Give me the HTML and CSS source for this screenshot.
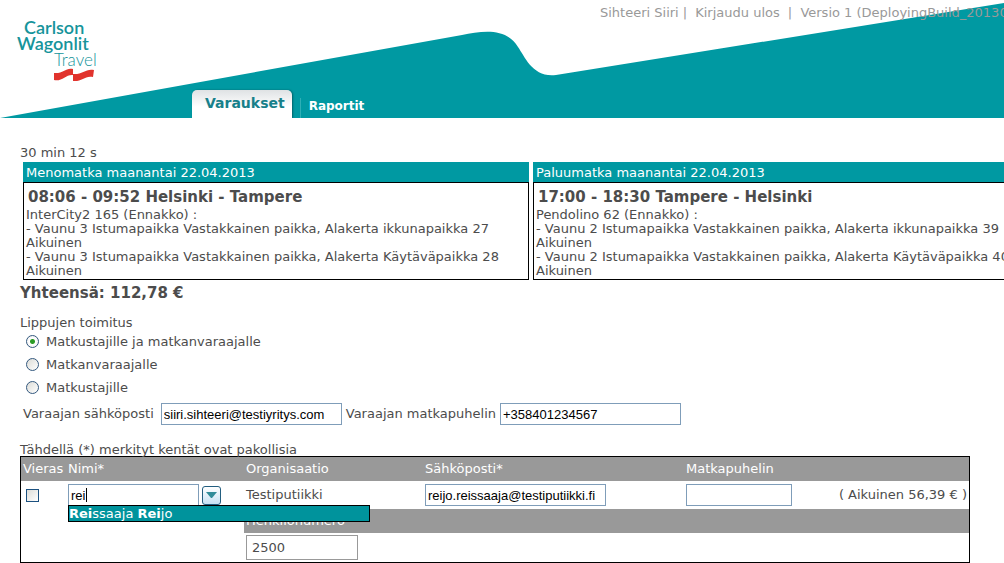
FILE: index.html
```html
<!DOCTYPE html>
<html lang="fi">
<head>
<meta charset="utf-8">
<title>Varaukset</title>
<link rel="stylesheet" href="styles.css">
</head>
<body>
<header class="header">
  <svg class="wave" aria-hidden="true">
    <path d="M0 118 L462 35 C482 31 506 27 518 47 C525 57 533 78 556 75 L1004 3 L2200 -189 V118 Z" fill="#0099a2"/>
  </svg>
  <svg class="logo" viewBox="0 0 90 66" role="img" aria-label="Carlson Wagonlit Travel">
    <text class="logo-name" x="12" y="17">Carlson</text>
    <text class="logo-name" x="5" y="33">Wagonlit</text>
    <text class="logo-light" x="42" y="49">Travel</text>
    <path d="M42 56 C51 57 54 50 61 52 L61 57 C70 58 74 51 82 53 L81 60 C73 58 70 65 61 64 L61 58 C54 57 50 65 42 63 Z" fill="#e1332d"/>
  </svg>
  <p class="session"><span>Sihteeri Siiri |</span><a href="#">Kirjaudu ulos</a><span class="version">|&nbsp; Versio 1 (DeployingBuild_201303</span></p>
  <nav class="tabs">
    <a class="tab tab-active" href="#">Varaukset</a>
    <a class="tab" href="#">Raportit</a>
  </nav>
</header>

<main class="content">
  <p class="timer">30 min 12 s</p>
  <section class="trips">
    <article class="trip">
      <h2 class="trip-day">Menomatka maanantai 22.04.2013</h2>
      <div class="trip-body">
        <h3 class="trip-title">08:06 - 09:52 Helsinki - Tampere</h3>
        <p>InterCity2 165 (Ennakko) :</p>
        <p>- Vaunu 3 Istumapaikka Vastakkainen paikka, Alakerta ikkunapaikka 27<br>Aikuinen</p>
        <p>- Vaunu 3 Istumapaikka Vastakkainen paikka, Alakerta Käytäväpaikka 28<br>Aikuinen</p>
      </div>
    </article>
    <article class="trip">
      <h2 class="trip-day">Paluumatka maanantai 22.04.2013</h2>
      <div class="trip-body">
        <h3 class="trip-title">17:00 - 18:30 Tampere - Helsinki</h3>
        <p>Pendolino 62 (Ennakko) :</p>
        <p>- Vaunu 2 Istumapaikka Vastakkainen paikka, Alakerta ikkunapaikka 39<br>Aikuinen</p>
        <p>- Vaunu 2 Istumapaikka Vastakkainen paikka, Alakerta Käytäväpaikka 40<br>Aikuinen</p>
      </div>
    </article>
  </section>
  <p class="total">Yhteensä: 112,78 €</p>

  <fieldset class="delivery">
    <legend>Lippujen toimitus</legend>
    <label class="option"><input type="radio" name="delivery" checked>Matkustajille ja matkanvaraajalle</label>
    <label class="option"><input type="radio" name="delivery">Matkanvaraajalle</label>
    <label class="option"><input type="radio" name="delivery">Matkustajille</label>
  </fieldset>

  <div class="booker">
    <label for="booker-email">Varaajan sähköposti</label>
    <input class="field field-wide" id="booker-email" type="text" value="siiri.sihteeri@testiyritys.com">
    <label for="booker-phone">Varaajan matkapuhelin</label>
    <input class="field field-wide" id="booker-phone" type="text" value="+358401234567">
  </div>

  <p class="hint">Tähdellä (*) merkityt kentät ovat pakollisia</p>
  <table class="travellers">
    <colgroup><col class="col-guest"><col class="col-name"><col class="col-org"><col class="col-email"><col></colgroup>
    <thead>
      <tr><th>Vieras</th><th>Nimi*</th><th>Organisaatio</th><th>Sähköposti*</th><th>Matkapuhelin</th></tr>
    </thead>
    <tbody>
      <tr class="person">
        <td><input class="check" type="checkbox" aria-label="Vieras"></td>
        <td>
          <div class="combo">
            <div class="name-box"><input class="field name-field" type="text" value="rei" aria-label="Nimi"><span class="caret"></span></div>
            <button class="combo-button" type="button" aria-label="Avaa lista"><svg width="11" height="6" viewBox="0 0 11 6"><path d="M0 0 H11 L6 6 H5 Z" fill="#318c99"/></svg></button>
            <div class="suggestions"><b>Rei</b>ssaaja <b>Rei</b>jo</div>
          </div>
        </td>
        <td>Testiputiikki</td>
        <td><input class="field field-wide" type="text" value="reijo.reissaaja@testiputiikki.fi" aria-label="Sähköposti"></td>
        <td><div class="last"><input class="field phone-field" type="text" aria-label="Matkapuhelin"><span>( Aikuinen 56,39 € )</span></div></td>
      </tr>
      <tr><td colspan="2"></td><th colspan="3"><label for="staff">Henkilönumero</label></th></tr>
      <tr class="staff-row"><td colspan="2"></td><td colspan="3"><input class="staff-field" id="staff" type="text" value="2500"></td></tr>
    </tbody>
  </table>
</main>
</body>
</html>
```
FILE: styles.css
```css
* { box-sizing: border-box; }
body { margin: 0; background: #fff; color: #4c4c4c; font: 13px/14px "DejaVu Sans", sans-serif; overflow-x: hidden; }
p, h2, h3 { margin: 0; font-size: 13px; font-weight: normal; }

.header { position: relative; display: flex; flex-direction: column; justify-content: space-between; height: 118px; overflow: hidden; }
.wave { position: absolute; inset: 0; width: 100%; height: 100%; }
.logo { position: absolute; left: 12px; top: 17px; width: 90px; height: 66px; overflow: visible; }
.logo-name { font: 600 18px Lato, sans-serif; fill: #16949b; }
.logo-light { font: 300 17px Lato, sans-serif; fill: #16949b; }
.session { position: relative; display: flex; gap: 8px; padding: 6px 0 0 600px; color: #999; white-space: nowrap; }
.session a { color: inherit; text-decoration: none; }
.tabs { position: relative; display: flex; align-items: flex-end; gap: 8px; padding-left: 192px; }
.tab { padding: 0 8px 4px; border-left: 1px solid #2eafb6; color: #fff; font-size: 12px; line-height: 16px; font-weight: bold; text-decoration: none; }
.tab-active { height: 28px; padding: 4px 7px 0 13px; border: 0; border-radius: 5px 5px 0 0; background: linear-gradient(#dfe2e4, #fff 60%); box-shadow: 1px 0 2px #00636a; color: #17808a; font-size: 14px; line-height: 18px; }

.content { padding: 28px 0 0 20px; }
.trips { display: grid; grid-template-columns: repeat(2, minmax(506px, 1fr)); gap: 4px; padding: 2px 0 0 3px; }
.trip-day { padding: 4px 3px 2px; background: #0099a2; color: #fff; }
.trip-body { border: 1px solid #000; padding: 5px 2px 1px; }
.trip-title { padding: 0 2px 2px; font-size: 15px; line-height: 18px; font-weight: bold; }
.total { padding-top: 4px; font-size: 15px; line-height: 18px; font-weight: bold; }

.delivery { margin: 14px 0 0; padding: 0; border: 0; }
.delivery legend { padding: 0; }
.option { display: flex; align-items: center; gap: 7px; height: 23px; padding-left: 6px; }
.option input { appearance: none; width: 13px; height: 13px; margin: 0; border: 1px solid #33587e; border-radius: 50%; background: linear-gradient(135deg, #dcdcd7, #fff); }
.option input:checked { background: radial-gradient(circle, #2b9b25 0 2px, #fff 3px, #eee); }

.booker { display: flex; align-items: center; gap: 4px; padding: 4px 0 0 3px; }
.booker label:first-child { margin-right: 3px; }
.field { height: 22px; margin: 0; padding: 0 2px; border: 1px solid #7f9db9; background: #fff; color: #000; font: 13px "Liberation Sans", Arial, sans-serif; outline: 0; }
.field-wide { width: 181px; }

.hint { padding-top: 18px; margin-bottom: -1px; }
.travellers { width: 950px; max-width: 100%; table-layout: fixed; border: 1px solid #000; border-spacing: 0; }
.col-guest { width: 45px; }
.col-name { width: 178px; }
.col-org { width: 179px; }
.col-email { width: 261px; }
.travellers th { height: 24px; padding: 0 2px; background: #999; color: #fff; font-weight: normal; text-align: left; white-space: nowrap; }
.travellers td { padding: 0 2px; }
.person { height: 28px; }
.staff-row { height: 29px; }
.check { display: block; appearance: none; width: 13px; height: 13px; margin: 0 0 0 3px; border: 1px solid #1c5180; background: linear-gradient(135deg, #dcdcd7, #fff); }
.combo { position: relative; display: flex; align-items: center; gap: 3px; }
.name-box { position: relative; }
.name-field { display: block; width: 131px; }
.caret { position: absolute; left: 18px; top: 4px; width: 1px; height: 14px; background: #000; }
.combo-button { display: flex; align-items: center; justify-content: center; width: 19px; height: 19px; padding: 0; border: 1px solid #235e80; border-radius: 3px; background: linear-gradient(#fff, #c6e1f3); }
.suggestions { position: absolute; z-index: 1; left: 0; top: 21px; width: 302px; height: 17px; border: 1px solid #000; background: #00939c; color: #fff; line-height: 15px; }
.last { display: flex; align-items: center; justify-content: space-between; white-space: nowrap; }
.phone-field { width: 106px; }
.staff-field { display: block; width: 112px; height: 25px; padding: 0 5px; border: 1px solid #999; color: #4c4c4c; font: 13px "DejaVu Sans", sans-serif; }
```
